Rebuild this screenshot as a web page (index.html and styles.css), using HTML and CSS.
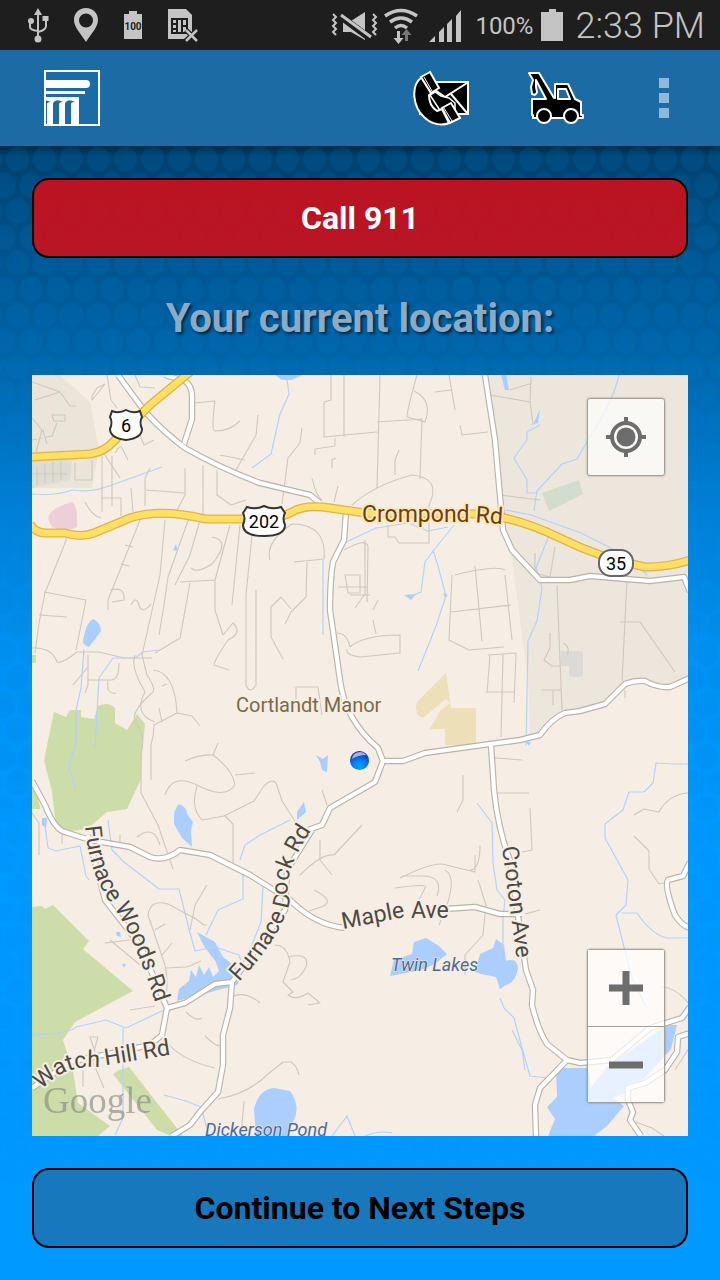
FILE: index.html
```html
<!DOCTYPE html>
<html lang="en">
<head>
<meta charset="utf-8">
<meta name="viewport" content="width=device-width, initial-scale=1">
<title>Your current location</title>
<link rel="stylesheet" href="styles.css">
</head>
<body>
<div class="status">
  <div class="status-left">
    <svg width="22" height="36" viewBox="27 8 22 36" class="ico">
      <path d="M38 14V40M30 22V28Q30 31 38 32M46 20V27Q46 31 38 33" fill="none" stroke="#c4c4c4" stroke-width="2"/>
      <path d="M38 9l4 7h-8z"/><circle cx="31" cy="22" r="3"/><path d="M42.500 17h6v5h-6z"/><circle cx="38" cy="40" r="3.500"/>
    </svg>
    <svg width="26" height="36" viewBox="73 8 26 36" class="ico">
      <path fill-rule="evenodd" d="M86 9C79 9 74 14 74 21C74 28 81 35 86 43C91 35 98 28 98 21C98 14 93 9 86 9zM86 14.500a7 7 0 1 1 0 14a7 7 0 1 1 0-14z"/>
    </svg>
    <svg width="20" height="36" viewBox="124 8 20 36" class="ico">
      <path d="M125 15h5v-3h8v3h5v25h-18z"/><text x="134" y="31" class="mini">100</text>
    </svg>
    <svg width="32" height="36" viewBox="167 8 32 36" class="ico">
      <path d="M168 10h18l6 6v18l-8 6h-16z"/>
      <path d="M172 20h15v14h-15zM177 20v14M182 20v14M172 25h5M172 30h5M182 27h5" fill="none" stroke="#1e1e1e" stroke-width="2"/>
      <path d="M186 31l11 11M197 31l-11 11" stroke="#1e1e1e" stroke-width="5"/>
      <path d="M186 31l11 11M197 31l-11 11" stroke="#c4c4c4" stroke-width="2.500"/>
    </svg>
  </div>
  <div class="status-right">
    <svg width="132" height="36" viewBox="335 8 132 36" class="ico">
      <path d="M337 14l3 3-3 3 3 3-3 3 3 3-3 3 3 3M377 14l3 3-3 3 3 3-3 3 3 3-3 3 3 3" fill="none" stroke="#c4c4c4" stroke-width="2"/>
      <path d="M347 21h8l14-9v28l-14-8h-8z"/>
      <path d="M344 16l31 23" stroke="#1e1e1e" stroke-width="7"/><path d="M345 15l30 22" stroke="#c4c4c4" stroke-width="3"/>
      <path d="M389 16q16-11 32 0M394 22q11-8 22 0M399 28q6-5 12 0" fill="none" stroke="#c4c4c4" stroke-width="3.500"/>
      <path d="M401 31h3v7h3.500l-5 6-5-6h3.500z"/><path fill="#777" d="M409 41v-6h-3.500l5-6 5 6h-3.500v6z"/>
      <path d="M433 42h6v-6zM443 42h5V27l-5 5zM451 42h5V19l-5 5zM460 42h5V10l-5 6z"/>
    </svg>
    <span class="pct">100%</span>
    <svg width="22" height="36" viewBox="542 8 22 36" class="ico"><path d="M542 12h8V9h7v3h7v29h-22z"/></svg>
    <time class="clock">2:33 PM</time>
  </div>
</div>

<header class="bar">
  <svg class="logo" width="56" height="56" viewBox="0 0 56 56">
    <path d="M1 1h54v54H1z" fill="none" stroke="#fff" stroke-width="2"/>
    <g fill="#fff"><path d="M1 10h41q4 0 4 4t-4 4H1zM1 21h40v3H1z"/><path d="M1 27h34v27h-8V34q0-2 4-2-7-4-10 1v21h-6V34q0-2 4-2-7-4-10 1v21H3V34q0-2 4-2l-6-2z"/></g>
  </svg>
  <div class="actions">
    <button class="act" aria-label="Contact">
      <svg width="58" height="56" viewBox="411 70 58 56">
        <path d="M419 82h48v32h-48z" fill="#000" stroke="#fff" stroke-width="2"/>
        <path d="M466 83L444 97 434 90M450 94L466 113" fill="none" stroke="#fff" stroke-width="2"/>
        <path d="M419 100v14h8z" fill="#fff"/>
        <path d="M429 95l5-3 6 4 8 2 6 5v9h-14z" fill="#000" stroke="#fff" stroke-width="1.500"/>
        <path d="M421 77C409 86 412 107 423 117C431 125 442 126 448 123L441 109 436 111Q428 106 428 95L431 93Z" fill="#000" stroke="#fff" stroke-width="2" stroke-linejoin="round"/>
        <path d="M420 77L429 72 438 88 430 93ZM441 108L450 103 459 118 449 123Z" fill="#000" stroke="#fff" stroke-width="2"/>
        <path d="M423 77l8 14M443 108l8 13" stroke="#fff" stroke-width="1"/>
      </svg>
    </button>
    <button class="act" aria-label="Towing">
      <svg width="58" height="56" viewBox="525 70 58 56">
        <g fill="#000" stroke="#fff" stroke-width="2" stroke-linejoin="round">
          <path d="M528 73h10l15 25h1V84h13l7 15 6 3v13h2v3h-50v-3h-1v-16h14l-10-19v7l1 5q-1 4-5 2l-1-7 2-7z"/>
          <path d="M557 89h8l4 10h-12z" fill="#1d6ba4"/><circle cx="543" cy="116" r="7"/><circle cx="570" cy="116" r="7"/>
        </g>
      </svg>
    </button>
    <button class="act more" aria-label="More options"><i></i><i></i><i></i></button>
  </div>
</header>

<main class="page">
  <button class="btn red">Call 911</button>
  <h1>Your current location:</h1>
  <section class="map" aria-label="Map">
    <svg class="chart" viewBox="32 375 656 761" preserveAspectRatio="xMidYMid slice">
      <g class="land">
        <path fill="#ede6dc" d="M486 375H688V680L668 687 645 681 625 682 605 700 565 713 540 735 530 738 528 680 512 560 500 515z"/>
        <path fill="#ebe4d9" d="M32 375H60L90 402 99 450 92 488 32 488z"/>
        <path fill="#dfddd3" d="M32 461L72 458 70 480 32 488z"/>
        <path fill="#edcfd8" d="M48 519q0-10 24-17 6 2 5 25-10 6-25 0z"/>
        <path fill="#d2ddcf" d="M542 493l37-13 4 14-34 17z"/>
        <path fill="#dcdad6" d="M561 651h22v26h-14v-11h-8z"/>
        <path fill="#eddfb8" d="M446 673l5 35h25v37h-31v-16h-15l10-18 10-8-4-4-22 18q-6 2-8-8-1-6 4-10z"/>
      </g>
      <g class="green">
        <path d="M54 712l12 5 4-7h11v7l13 2 4-13q10-5 17 2v15l12 7 10-16 8 10-3 30-1 25-14 30-20 3-20 17-22 3q-7-3-10-15l-3-25-8-32z"/>
        <path d="M32 907l10-1 3 3 8-4 36 36-6 8 50 42-58 31-12 18 10 31 5 32 32 23-12 10H32z"/>
        <path d="M119 1070l10-3 54 69h-12l-14-6-44-56z"/><path d="M32 780l8 26v3h-8zM32 655h4v8h-4z"/>
      </g>
      <g class="water">
        <path d="M83 640q4-20 11-21 7 5 7 12l-5 7-7 9q-7-2-6-7z"/><path d="M174 824q-1-15 5-20 8 3 8 10l6 8-2 8 1 17-10-9z"/><path d="M316 755l7 4 5-4-1 17-5-2-2-8z"/>
        <path d="M297 812l7-10 2 10-9 8z"/><path d="M275 375h27l-10 5h-10zM533 425l7-16-2 14-9 2zM501 375h5l3 15-4 0z"/><path d="M404 595l12-1-5 6zM443 593l5 2-3 3z"/>
        <path d="M390 976l4-16 18-6 2-12 12-4 13 8 8 8-12 10-14 6z"/><path d="M475 972l5-18 13-6 3-9 8 6 2 16q12-4 12 8-3 14-12 16l-6 4-4-12-15-3z"/>
        <path d="M177 1001l2-12 10-8 2-11 5 7 3-12 5 10 5-8 4 10 6-6-3-9-12-16-7-14 18 10 8 15 13 10 5 12-4 6z"/>
        <path d="M256 1136l-2-27q5-20 20-21l16 3q12 16 2 33l-3 12z"/><path d="M556 1068l32 0 3 19 16-20 60-42 10 0-6 24-25 28-16 14-17 7 11 8-17 20-13 10h-46l7-17-8-12 10-10z"/>
        <path d="M173 550l3-6 2 7zM116 932h4l1 5-4-1zM122 964h4l-2 4zM42 818h5l-1 10-4-3zM526 742h5l-2 4z"/>
      </g>
      <g class="stream">
        <path d="M32 494q25 2 40-4 20 3 40-5l50-18M287 380l2 14-9 20-9 40-19 14M84 650l-3 38-5 22v35l-8 20 8 25M158 650l-15 2-8 6-22 0-14 20-4 70M323 560q0 13 0 75M344 543l32-15 32-5 20 8 20-4M454 525l-20 25-9 12-4 30-10 4M433 550l5 16 8 30-10 30-18 45M619 375q-6 27-28 60l-14 24-15 5-25 27-3 20M540 425l-13 7 0 8-13 18 13 22v13h10M506 510l25 5 50 18 50 25 16 17M550 533l-14 35 6 20-5 33-9 20-2 105M477 803l15 20 1 40 4 27 8 10-2 18v30M500 998l4 10 10 10 8 30 8 28 18 2M512 1030l10 20 3 20M688 764h-15l-17-1-3 20-9 9-15 0-6 18-18 14v14l23 42-2 25-10 10 7 28 8 32 15 32M622 913h15q15 22 30 25h22M32 1035q40-2 44-8l30-7 20 8 38-18M123 1028v90l-8 17M164 1095l22 6 15 6 8 29M45 825l3 23 8 3 24-5 6 30 3 4M108 820l4 30 12 12 35 27h20l10 40 6 22 20-4 24 8 4 12 18-45 2-35M206 935l12-25 25-11 0-25M240 860l5-15 15-10 30-15M332 1136l15-20 8 20M365 1136q15-6 27-3"/>
      </g>
      <g class="minor">
        <path d="M32 382l28 10 10 14 6 0M35 400l25-8M32 418l10 12-6 22M43 430l4 14M32 440l20-4 5-13M52 415h13v6H54zM37 467v18M45 464v20M53 462v20M61 462v18M32 474h35M75 463v17h17v-20M92 396l5-8 8-4-8 10-5 6zM107 375l4 25 6 8M135 375l5 12 15 1M102 452v60M112 456v50M105 455l15 23M115 453q5-9 7-5l6 12M136 425l8 20 10-5M150 468l-5 10v28M146 490l39 3M185 468v27l-8 15M203 465v50M101 498h20v18M131 488l2 24M85 502q7 14 16 16M217 470v25l14 10 15-5M195 403l20-2q-4 30 0 30 15 0 25-10M258 415l-2 20-20 35M220 455l25 5M302 428l-2 15-12 15-6 46M312 478q4 18 10 22M338 486l-4 16M331 375v25l-7 2v35l53-5M344 375v62M380 375l-3 113M377 422l45-3-2 60M417 375q-10 35-10 42l18 5q8-22-11-31M449 375l6 35M435 392l16-2M460 425l2 10 26-3M352 505q22-20 60-30 30 3 17 30v38l-30 0-4-6h-7v-12M335 438v8M315 455v-6l20-3M395 475v-15l4-10M332 468l0-8 4-2"/>
        <path d="M67 538l-22 55-6 30-4 30M44 592l42 8-10 50M39 615l28 2M32 648q20 -1 25 14 5 2 20-10l22 0 25 6h28M140 520l-32 80v10M125 545l8 2M121 564l8 2M110 590q15-4 14 10l-12 2M131 605q5-10 8 0t12-1M165 520l-5 55-18 80 5 20q10 15 5 18-23 20-16 30 10 15 5 30v40l17 32 15 44M190 515l-22 62-4 28-5 30M200 520l-10 35-15 30M212 537q20 3 0 27-15 10-21 4M180 582l35-2M190 583l-10 55-25 15M230 525l-15 55 0 30 8 25 10-12q10 10-5 17-13 19-14 25l15 5M240 525l-8 80M252 535l-6 60 0 90q4 10 10 0V590M270 560q-5-18 22-36 35 0 32 35l-30 3M307 562l-1 35-15 15-6 12M281 597l-10 10 0 30 12 22M281 597l10 12M350 595l20 0M344 550q23-13 24-3l-1 55M345 575l15 0v18h-12zM338 587h30M337 633q10 0 13 14 13-12 50-12v18l-40 4q-15-2-13-8M296 687h22l4 28M296 687v20M373 620l3 14M373 610l5-10M365 540v54l-10 14M455 575q40-10 50-5M452 575l-3 65 20 10 35-3M475 566l7 75M451 612l60-7M505 575l7 65M488 655l28-2-2 50M490 655l-3 38M503 655l-2 82M487 692h28M463 775l0 25-6 12"/>
        <path d="M557 585l5 125M627 580l-5 101M620 622h20l35 50M541 690h20M550 633v15l-6 12 8 6h8M553 705v-14M563 643q8 4 4 12M535 553l0 20 15 4 5-30M500 495l40 5M490 395l40 7 1-25M530 402l3 22M510 390l22-7M625 690l0 8M88 655l0 30-3 8M88 680h23q8 0 8-17M73 685l15-18M108 681q-2 14 8 12M153 670q22 2 24 43l-23 12q0 10-3 20v35M162 686l5-2M159 708l3 14M177 713l15 3 8 10M135 655q-5 12 10 37-12 22 10 30M185 761q15-7 28-6 20 15 22 30-10 15-38 0-25-12-32 10M197 786q-7 22 5 34l22-4 30-15 10-15q8-8 12-3l6 18 16 25M225 816l8 8 0 42M213 755l5-12M235 775l20-2M322 790l5 15M137 837q17-13 23 8M32 813l7 10 0 32M62 834v10M120 835l0 10"/>
        <path d="M300 875q22-22 34-20l28-30M320 840l0 20 12 15M400 878q30-15 42-14l33 8v-17M402 876l20 0q22 0 15 20M395 888q35-5 30 0l-10 20M445 870q15 8-6 55M314 890q20 10 10 16l-15 5M275 945q12 0 15 17l-7 20 10 10-5 3q8 6 20-2l12 10-12 2M288 957q22-5 18 10-6 12-15 13M227 1000q15-12 33 3M148 915q2-16 20-11l28 15 8 6 3 0M148 915l17 50q5 22-2 40M165 968l22-1 14-6M155 930l10-6M162 955l10-12M190 930l5-25 12-20M140 965l-30-25M105 943l25-3M130 1010l25-4M95 1052l-5-15 8 0-4 14M83 1055v32M92 1060l12 28M165 1040q15 20 50 28M218 1099q30-5 50-25l15-12h8q6 4 8 13M186 1012q10 10 16 6M205 1036q10 10 15 10M241 1136l3-35M630 1120l22 8 12 8M661 987q15 0 29 18M634 815l10-6 15 3q10-18 30-19M634 836l15 15 0 18 10 15 20-4M495 758l28 2M497 793h32M530 808l2 42-15 3M480 845q0 25-10 25M540 910l-15 4M478 880l8 25-3 30-18 20 0 20M675 1070l14-22"/>
      </g>
      <g class="case">
        <path id="r0" d="M118 375L140 405Q155 425 185 448 220 468 260 483L310 495 320 503M165 375l20 6q8 5 7 20v18l-8 25"/>
        <path id="r1" d="M346 512L344 540 333 562Q330 580 330 610L340 680Q345 720 378 748L383 761 375 782 330 808 322 825 308 830"/>
        <path id="r2" d="M383 761L403 761 425 753 490 744 520 740 540 735Q552 718 565 713L580 711 605 704 625 684Q635 680 645 681 658 688 670 687L690 678"/>
        <path id="r3" d="M485 375L495 440 503 530 512 550 540 580 570 580 590 576 650 581 684 577 690 592"/>
        <path id="r4" d="M491 745L494 790Q498 830 510 860L520 930 526 970 533 990 532 1005Q538 1030 547 1044L567 1060 580 1063 612 1060 650 1028 682 1018 690 1007M567 1060L540 1088 535 1105 536 1136"/>
        <path id="r5" d="M690 1033L678 1037 677 1052 665 1070 645 1083 628 1088 628 1100 633 1112 630 1120 641 1136M690 862L683 876 668 880Q664 886 675 915 682 926 690 928"/>
        <path id="r6" d="M32 781L45 805Q55 830 65 832L90 840 130 847 150 857Q165 862 180 850L210 855 250 875 290 900Q315 925 345 928M445 909L475 907 500 914 522 914"/>
        <path id="r7" d="M88 835L105 900 140 945 167 1008 185 1003 215 984 232 982 230 1008 223 1035 223 1065 218 1092 200 1112 190 1125 172 1136M167 1008L162 1035 150 1045 70 1062 32 1088M232 982L285 910 287 870 312 830"/>
      </g>
      <g class="fill"><use href="#r0"/><use href="#r1"/><use href="#r2"/><use href="#r3"/><use href="#r4"/><use href="#r5"/><use href="#r6"/><use href="#r7"/></g>
      <g class="hwy-case"><path id="h1" d="M30 457L90 454Q105 452 115 440L150 405 190 372"/><path id="h2" d="M30 524Q36 533 45 533L65 533Q82 538 94 533L130 518Q160 508 205 519L245 519Q280 519 292 512 305 504 330 508L365 513 480 514Q520 518 560 538T645 567Q670 567 690 560"/></g>
      <g class="hwy"><use href="#h1"/><use href="#h2"/></g>
      <g class="shield">
        <path d="M112 411q7 3 14-1 7 4 14 1l2 6q-3 5 0 12 0 9-16 11-16-2-16-11 3-7 0-12z"/>
        <path d="M247 507q9 3 17-1 8 4 17 1l4 6q-3 5 0 12 0 11-21 11t-21-11q3-7 0-12z"/>
        <rect x="599" y="550" width="34" height="26" rx="12" stroke="#666"/>
      </g>
      <g class="num"><text x="126" y="432">6</text><text x="264" y="528">202</text><text x="616" y="570">35</text></g>
      <defs>
        <path id="t1" d="M85 826Q89 875 112 905T162 1024"/><path id="t2" d="M239 982Q283 935 290 900 278 870 330 805"/>
        <path id="t3" d="M343 929L400 918 470 918"/><path id="t4" d="M502 847L518 970"/><path id="t5" d="M42 1090Q62 1066 95 1067L200 1050"/>
        <path id="t6" d="M362 522L470 522 530 526"/>
      </defs>
      <g class="road-name">
        <text><textPath href="#t1">Furnace Woods Rd</textPath></text><text><textPath href="#t2">Furnace Dock Rd</textPath></text>
        <text><textPath href="#t3">Maple Ave</textPath></text><text><textPath href="#t4">Croton Ave</textPath></text><text><textPath href="#t5">Watch Hill Rd</textPath></text>
        <text class="brown"><textPath href="#t6">Crompond Rd</textPath></text>
      </g>
      <text class="town" x="236" y="712">Cortlandt Manor</text>
      <g class="lake-name"><text x="391" y="971">Twin Lakes</text><text x="205" y="1136">Dickerson Pond</text></g>
      <text class="google" x="43" y="1113">Google</text>
      <defs><radialGradient id="dot" cx=".5" cy=".85" r=".8"><stop offset="0" stop-color="#00a8ff"/><stop offset=".5" stop-color="#0878f0"/><stop offset="1" stop-color="#1030a8"/></radialGradient></defs>
      <circle cx="359.500" cy="760.500" r="9.500" fill="url(#dot)"/><path d="M352 759q1-7 8-7 4 0 6 3-8 0-14 4z" fill="#fff" opacity=".6"/>
    </svg>
    <div class="controls">
      <button class="ctl" aria-label="My location">
        <svg width="40" height="40" viewBox="0 0 40 40"><circle cx="20" cy="20" r="14" fill="none" stroke="#6d6d6d" stroke-width="4"/><circle cx="20" cy="20" r="9.500" fill="#6d6d6d"/><path d="M20 0v6M20 34v6M0 20h6M34 20h6" stroke="#6d6d6d" stroke-width="4"/></svg>
      </button>
      <div class="zoom">
        <button class="ctl" aria-label="Zoom in"><svg width="34" height="34" viewBox="0 0 34 34"><path d="M0 17h34M17 0v34" stroke="#6d6d6d" stroke-width="7"/></svg></button>
        <button class="ctl" aria-label="Zoom out"><svg width="34" height="34" viewBox="0 0 34 34"><path d="M0 17h34" stroke="#6d6d6d" stroke-width="7"/></svg></button>
      </div>
    </div>
  </section>
  <button class="btn blue">Continue to Next Steps</button>
</main>
</body>
</html>
```
FILE: styles.css
```css
* { box-sizing: border-box; }
body {
  margin: 0;
  min-height: 100vh;
  display: flex;
  flex-direction: column;
  font-family: Roboto, "Liberation Sans", sans-serif;
}
button { font: inherit; cursor: pointer; }
svg { display: block; }

.status {
  height: 50px;
  padding: 0 15px 0 27px;
  display: flex;
  justify-content: space-between;
  align-items: center;
  background: #1e1e1e;
  color: #c4c4c4;
}
.status-left { display: flex; gap: 24px; }
.status-right { display: flex; align-items: center; gap: 8px; padding-top: 2px; }
.ico { fill: #c4c4c4; }
.mini { font-size: 10px; font-weight: 700; fill: #1e1e1e; text-anchor: middle; }
.pct { font-size: 24px; margin-left: 4px; }
.clock { font-size: 36px; font-weight: 300; margin-left: 4px; }

.bar {
  height: 96px;
  padding: 0 44px;
  display: flex;
  justify-content: space-between;
  align-items: center;
  background: #1d6ba4;
}
.actions { display: flex; gap: 56px; }
.act {
  border: 0;
  padding: 0;
  background: none;
  display: flex;
  align-items: center;
}
.more { flex-direction: column; justify-content: center; gap: 5px; width: 24px; margin-left: 12px; }
.more i { width: 10px; height: 10px; background: #8fb9d8; }

.page {
  flex: 1;
  position: relative;
  isolation: isolate;
  display: flex;
  flex-direction: column;
  padding: 32px;
  background:
    linear-gradient(rgba(0, 0, 0, .35), transparent 10px),
    linear-gradient(#003f6c, #005088 8%, #0067ad 20%, #0080d8 32%, #0092f4 45%, #0099ff 60%);
}
.page::before {
  content: "";
  position: absolute;
  inset: 0;
  z-index: -1;
  background-image:
    radial-gradient(ellipse 13px 14px at 50% 25%, rgba(0, 125, 210, .16) 80%, transparent 98%),
    radial-gradient(ellipse 13px 14px at 0 75%, rgba(0, 125, 210, .16) 80%, transparent 98%),
    radial-gradient(ellipse 13px 14px at 100% 75%, rgba(0, 125, 210, .16) 80%, transparent 98%);
  background-size: 27px 52px;
  background-position: 4px 0;
  mask-image: linear-gradient(#000 40%, transparent 92%);
}

.btn {
  height: 80px;
  border: 2px solid #000;
  border-radius: 17px;
  font-size: 32px;
  font-weight: 700;
}
.red { background: rgba(200, 16, 28, .93); color: #fff; }
.blue { background: #1778bd; color: #000; }

h1 {
  margin: 34px 0 30px;
  font-size: 40px;
  line-height: 53px;
  font-weight: 700;
  text-align: center;
  color: #8aaac6;
  text-shadow: 2px 2px 3px rgba(0, 0, 0, .6);
}

.map {
  flex: 1;
  min-height: 400px;
  margin-bottom: 32px;
  display: grid;
  background: #f6eee4;
  overflow: hidden;
}
.chart, .controls { grid-area: 1 / 1; }
.chart { width: 100%; height: 100%; min-height: 0; }
.controls {
  z-index: 1;
  justify-self: end;
  display: flex;
  flex-direction: column;
  justify-content: space-between;
  padding: 23px 23px 33px;
}
.ctl {
  width: 78px;
  height: 78px;
  padding: 0;
  display: grid;
  place-items: center;
  border: 1px solid #a39f99;
  border-radius: 3px;
  background: rgba(255, 255, 255, .72);
  box-shadow: 0 0 2px rgba(0, 0, 0, .4);
}
.zoom { border: 1px solid #a39f99; border-radius: 3px; box-shadow: 0 0 2px rgba(0, 0, 0, .4); }
.zoom .ctl { width: 76px; height: 76px; border: 0; border-radius: 0; box-shadow: none; }
.zoom .ctl + .ctl { border-top: 1px solid #a39f99; }

.green path { fill: #cddda9; }
.water path { fill: #abceff; }
.stream path { fill: none; stroke: #b4d1fb; stroke-width: 1.2; stroke-linejoin: round; }
.minor path { fill: none; stroke: #cfc7be; stroke-width: 1.1; stroke-linejoin: round; }
.case { fill: none; stroke: #bbb3aa; stroke-width: 6.5; stroke-linejoin: round; }
.fill { fill: none; stroke: #fff; stroke-width: 4.2; stroke-linejoin: round; }
.hwy-case { fill: none; stroke: #dfb549; stroke-width: 9; }
.hwy { fill: none; stroke: #ffdf66; stroke-width: 6.4; }
.shield { fill: #fff; stroke: #333; stroke-width: 2; }
.num { font-size: 18px; text-anchor: middle; fill: #000; }
.road-name, .town, .lake-name { paint-order: stroke; stroke: #f6eee4; stroke-width: 4px; stroke-linejoin: round; }
.road-name { font-size: 23px; fill: #4c4a43; }
.brown { fill: #703b10; stroke: #fbe9bb; }
.town { font-size: 20px; fill: #7a6b48; }
.lake-name { font-size: 18px; font-style: italic; fill: #4e6a94; stroke-width: 1px; }
.google { font-family: "Liberation Serif", serif; font-size: 37px; fill: #8b8b80; opacity: .65; }
```
